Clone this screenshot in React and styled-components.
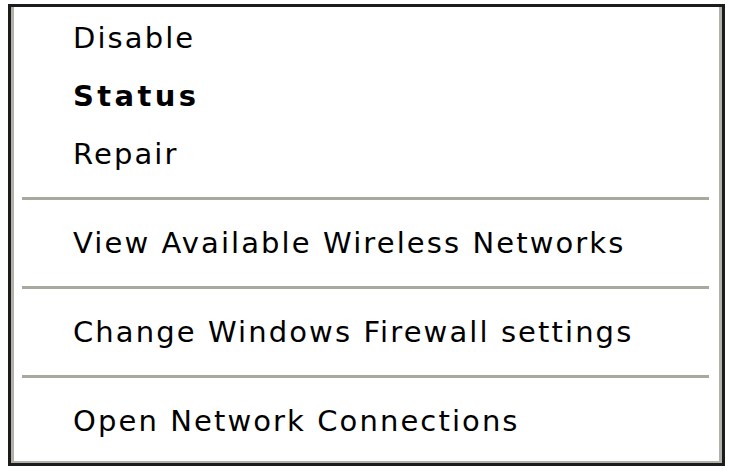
import React from "react";
import styled, { createGlobalStyle } from "styled-components";

const Global = createGlobalStyle`
    html, body {
        margin: 0;
        padding: 0;
        background: #ffffff;
    }
`;

const Page = styled.div`
    width: 729px;
    height: 472px;
    padding: 4px 0 0 8px;
    box-sizing: border-box;
`;

const Menu = styled.ul`
    list-style: none;
    margin: 0;
    width: 717px;
    height: 462px;
    box-sizing: border-box;
    padding: 2px 0 0 0;
    background: #ffffff;
    border: 3px solid #1c1c1c;
    box-shadow: inset 3px 0 0 #b3b2aa, inset -3px -2px 0 #b3b2aa;
    font-family: "DejaVu Sans", Verdana, sans-serif;
`;

const Item = styled.li`
    height: 58px;
    display: flex;
    align-items: center;
    padding-left: 62px;
    font-size: 29px;
    color: #000000;
    font-weight: ${(p) => (p.bold ? 700 : 400)};
    letter-spacing: ${(p) => (p.bold ? "3.4px" : "2.1px")};
    white-space: nowrap;
`;

const Separator = styled.li`
    height: 31px;
    display: flex;
    align-items: center;
    padding: 0 13px 1px 11px;
    box-sizing: border-box;
    &::before {
        content: "";
        flex: 1;
        height: 3px;
        background: #a9a89f;
    }
`;

const items = [
    { label: "Disable" },
    { label: "Status", bold: true },
    { label: "Repair" },
    { sep: true },
    { label: "View Available Wireless Networks" },
    { sep: true },
    { label: "Change Windows Firewall settings" },
    { sep: true },
    { label: "Open Network Connections" },
];

const App = () => {
    return (
        <>
            <Global />
            <Page>
                <Menu>
                    {items.map((it, i) =>
                        it.sep ? (
                            <Separator key={i} />
                        ) : (
                            <Item key={i} bold={it.bold}>
                                {it.label}
                            </Item>
                        )
                    )}
                </Menu>
            </Page>
        </>
    );
};

export default App;
